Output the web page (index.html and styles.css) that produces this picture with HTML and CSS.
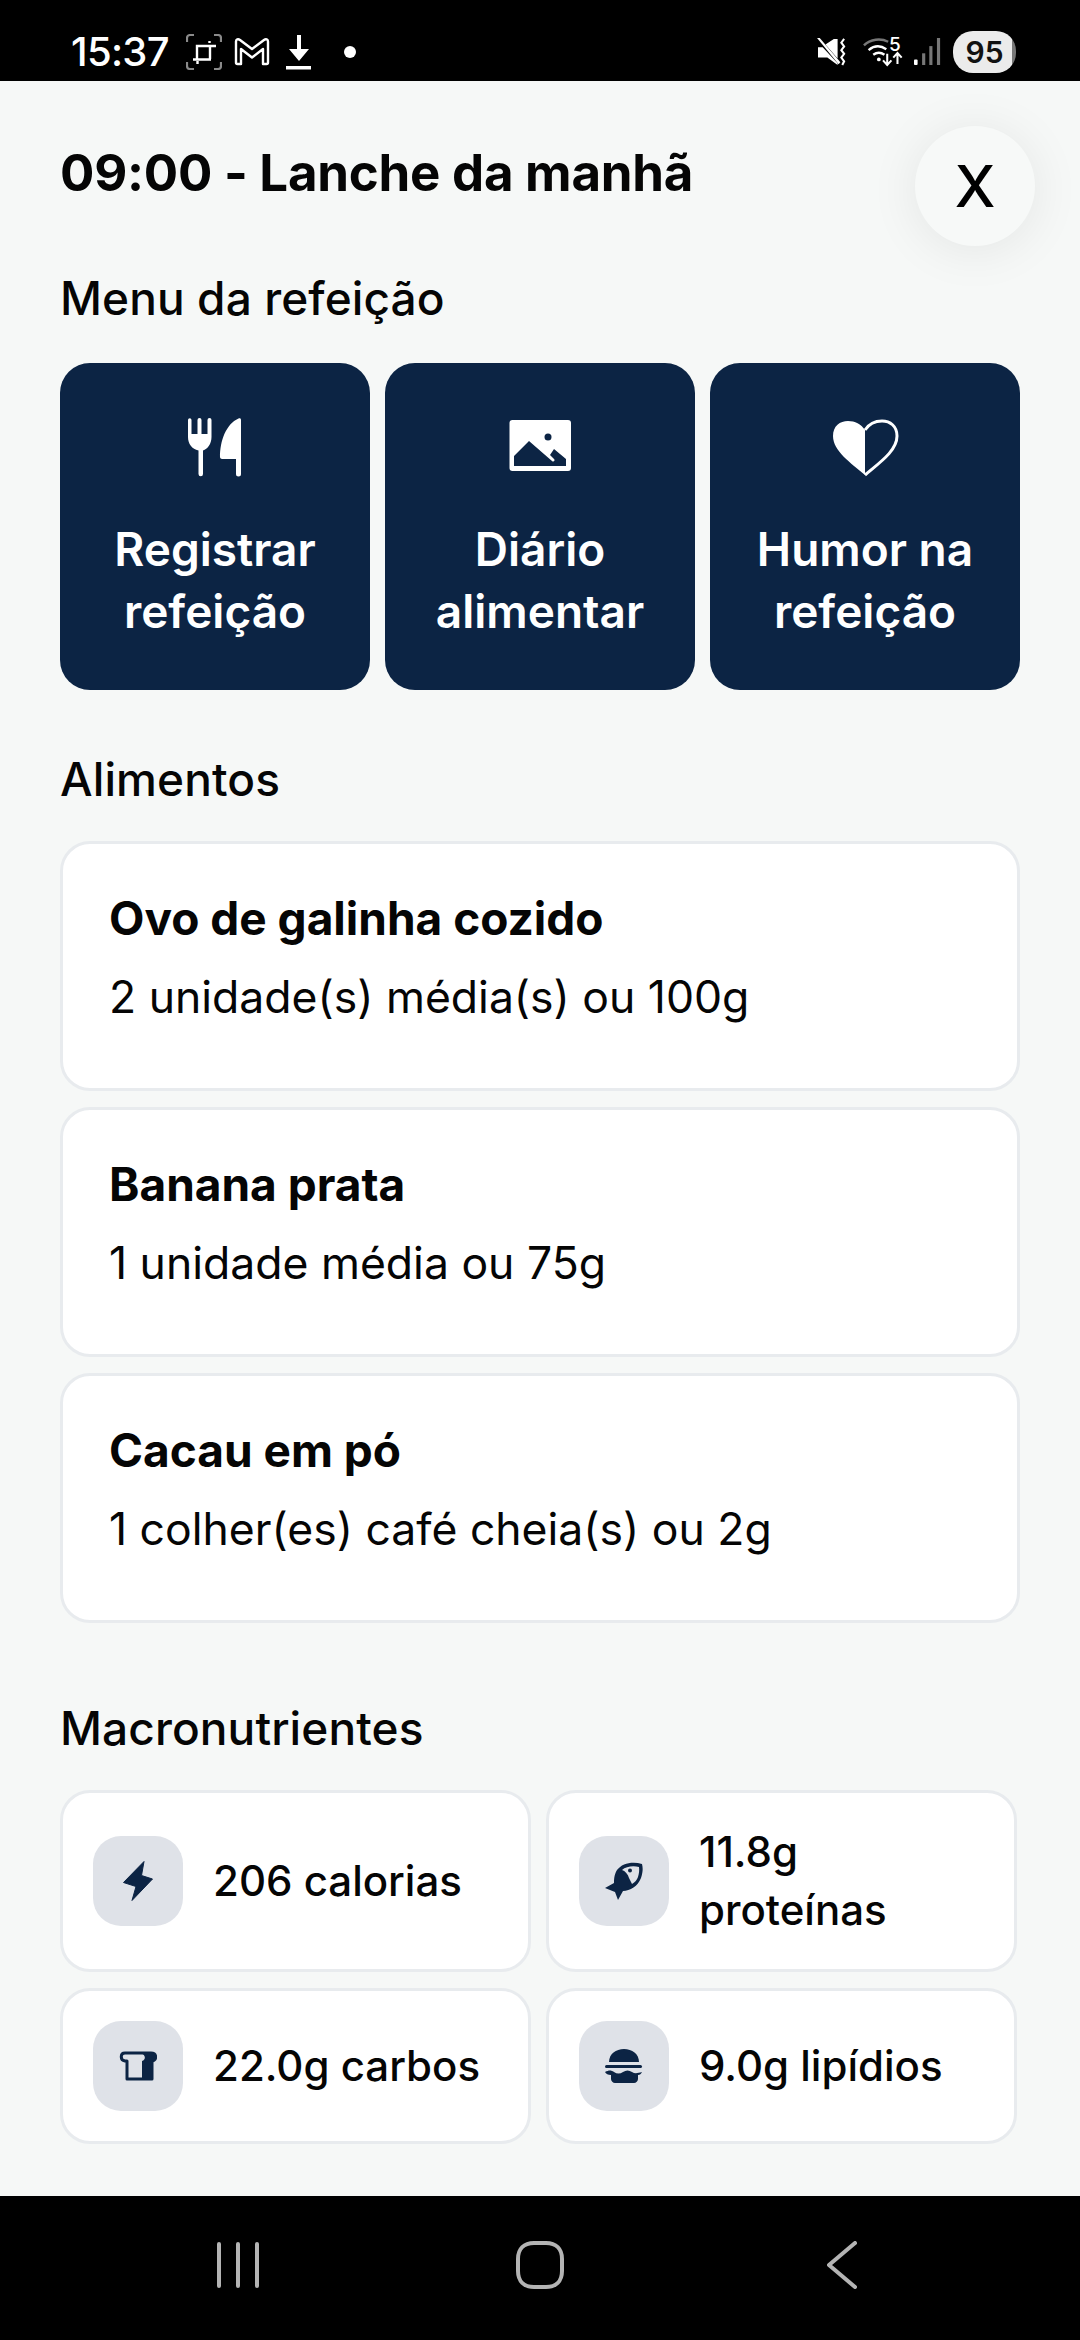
FILE: index.html
```html
<!DOCTYPE html>
<html lang="pt-BR">
<head>
    <meta charset="UTF-8">
    <meta name="viewport" content="width=device-width, initial-scale=1.0">
    <title>Lanche da manhã</title>
    <link rel="stylesheet" href="styles.css">
</head>
<body>

    <div class="status-bar">
        <div class="status-left">
            <span class="clock">15:37</span>
            <svg class="st-crop" width="36" height="36" viewBox="0 0 36 36" fill="none">
                <path d="M1 8V4a3 3 0 0 1 3-3h4M28 1h4a3 3 0 0 1 3 3v4M35 28v4a3 3 0 0 1-3 3h-4M8 35H4a3 3 0 0 1-3-3v-4" stroke="#8a8a8a" stroke-width="2.2"/>
                <path d="M7 25.500h18M11 25V12h19M24 12v13M23.500 7v2M11.500 27v3" stroke="#fff" stroke-width="2.4"/>
            </svg>
            <svg class="st-gmail" width="36" height="30" viewBox="0 0 36 30" fill="none">
                <path d="M7 27H3.500a1.500 1.500 0 0 1-1.500-1.500V4.500C2 2.500 4 1.500 6 3l12 9 12-9c2-1.500 4-.5 4 1.500v21a1.500 1.500 0 0 1-1.500 1.500H29V12l-11 8.500L7 12z" stroke="#fff" stroke-width="2.400" stroke-linejoin="round"/>
            </svg>
            <svg class="st-down" width="26" height="36" viewBox="0 0 26 36" fill="#fff">
                <path d="M11 1h4v14h8L13 27 3 15h8z"/>
                <rect x="0" y="32" width="25" height="3.500"/>
            </svg>
            <span class="st-dot"></span>
        </div>
        <div class="status-right">
            <svg class="st-mute" width="30" height="28" viewBox="0 0 32 30" fill="#fff">
                <path d="M1 10h5l16 17v2L11 21H1zM9 7l9-6h4v21z"/>
                <path d="M0 0l2-1 23 27-2 2z"/>
                <path d="M29 1l-3 4 3 4-3 4 3 4-3 4 3 4-2 4" fill="none" stroke="#fff" stroke-width="2.200"/>
            </svg>
            <div class="st-wifi">
                <svg width="41" height="30" viewBox="0 0 44 32" fill="none">
                    <path d="M1 9C8 2 19 1 27 5" stroke="#777" stroke-width="2.600"/>
                    <path d="M6 14c6-5 13-5 19-1M11 19c4-3 8-3 12 0" stroke="#fff" stroke-width="2.600"/>
                    <circle cx="17" cy="24" r="2" fill="#fff"/>
                    <path d="M26 18v12M21.500 25l4.500 5 4.500-5M37 29V17M32.500 22l4.500-5 4.500 5" stroke="#fff" stroke-width="2.200"/>
                </svg>
                <span class="wifi-five">5</span>
            </div>
            <svg class="st-signal" width="27" height="29" viewBox="0 0 30 30">
                <rect x="0" y="24" width="4" height="6" rx="1" fill="#fff"/>
                <rect x="9" y="17" width="3.500" height="13" fill="#777"/>
                <rect x="17" y="9" width="3.500" height="21" fill="#777"/>
                <rect x="25.500" y="0" width="3.500" height="30" fill="#777"/>
            </svg>
            <span class="battery">95</span>
        </div>
    </div>

    <main class="sheet">
        <button class="close-btn">X</button>

        <h1>09:00 - Lanche da manhã</h1>

        <h2 class="menu-title">Menu da refeição</h2>
        <div class="menu-grid">
            <div class="menu-btn">
                <svg width="80" height="80" viewBox="0 0 80 80" fill="#fff">
                    <path d="M13 11a1.700 1.700 0 0 1 3.500 0v14h6V11a2 2 0 0 1 4 0v14h6V11a2 2 0 0 1 4 0v17c0 7-4 12-8.500 13.500V65a2.200 2.200 0 0 1-4.500 0V41.500C17 40 13 35 13 28z"/>
                    <path d="M66 11v54a2.500 2.500 0 0 1-5 0V50H47c-1 0-2-1-2-2 0-16 6-33 18.500-38.500 1.500-.5 2.500 0 2.500 1.500z"/>
                </svg>
                <span>Registrar refeição</span>
            </div>
            <div class="menu-btn">
                <svg width="80" height="80" viewBox="0 0 80 80">
                    <rect x="9.500" y="11" width="61.500" height="51" rx="3" fill="#fff"/>
                    <circle cx="48" cy="28" r="3.500" fill="#0c2444"/>
                    <path d="M14 57V47l15-15 23 20c1.500 1.500 3.500-.5 2-2l-4-4 4-6 12 10v7z" fill="#0c2444"/>
                </svg>
                <span>Diário alimentar</span>
            </div>
            <div class="menu-btn">
                <svg width="80" height="80" viewBox="0 0 80 80">
                    <path d="M40 66C26 54 8 42 8 27 8 17 15 12 23 12c7 0 13 3 17 9z" fill="#fff"/>
                    <path d="M40 66c14-12 32-24 32-39C72 17 65 12 57 12c-7 0-13 3-17 9" fill="none" stroke="#fff" stroke-width="3"/>
                </svg>
                <span>Humor na refeição</span>
            </div>
        </div>

        <h2 class="foods-title">Alimentos</h2>
        <div class="food-list">
            <div class="food-card">
                <h3>Ovo de galinha cozido</h3>
                <p>2 unidade(s) média(s) ou 100g</p>
            </div>
            <div class="food-card">
                <h3>Banana prata</h3>
                <p>1 unidade média ou 75g</p>
            </div>
            <div class="food-card">
                <h3>Cacau em pó</h3>
                <p>1 colher(es) café cheia(s) ou 2g</p>
            </div>
        </div>

        <h2 class="macros-title">Macronutrientes</h2>
        <div class="macro-grid">
            <div class="macro-card">
                <div class="macro-icon">
                    <svg width="30" height="40" viewBox="0 0 30 40" fill="#0c2444">
                        <path d="M21 .5 .5 21.500 13 25.500 9 39.500 29.500 18 18.500 14.500z" stroke="#0c2444" stroke-linejoin="round"/>
                    </svg>
                </div>
                <span>206 calorias</span>
            </div>
            <div class="macro-card">
                <div class="macro-icon">
                    <svg width="38" height="38" viewBox="0 0 38 38">
                        <path d="M37 2C28-1 17 1 12 8c-3 5-3 10-3 13L0 26l10 4 3 8 5-9c7 0 15-5 18-13 2-6 2-10 1-14z" fill="#0c2444"/>
                        <path d="M34 5c-6-1.500-13-.5-17 3 3 1 6 4 7 8 1 2 2 4 3 6 3-2 5-4 6-7 1-3 1.500-7 1-10z" fill="#dfe2e8"/>
                        <circle cx="25" cy="8.500" r="2" fill="#0c2444"/>
                    </svg>
                </div>
                <span>11.8g proteínas</span>
            </div>
            <div class="macro-card">
                <div class="macro-icon">
                    <svg width="38" height="30" viewBox="0 0 38 30">
                        <path d="M8 28V10H6C1 9 1 2 6 2h26c6 0 6 7 1 8v18z" fill="none" stroke="#0c2444" stroke-width="3" stroke-linejoin="round"/>
                        <path d="M22 2h10c6 0 6 7 1 8v18H23V10c4-1 4-6-1-8z" fill="#0c2444"/>
                    </svg>
                </div>
                <span>22.0g carbos</span>
            </div>
            <div class="macro-card">
                <div class="macro-icon">
                    <svg width="38" height="34" viewBox="0 0 38 34" fill="#0c2444">
                        <path d="M4 13C4 5 11 0 19 0s15 5 15 13z"/>
                        <rect x="0" y="16" width="37" height="3" rx="1.500"/>
                        <path d="M0 23c4-2 6-2 9 0s6 2 9 0 6-2 9 0 6 1 10 0c-1 2-2 3-4 3v4c0 2-2 4-4 4H10c-2 0-4-2-4-4v-4c-3 0-5-1-6-3z"/>
                    </svg>
                </div>
                <span>9.0g lipídios</span>
            </div>
        </div>
    </main>

    <nav class="nav-bar">
        <div class="nav-slot">
            <svg width="44" height="48" viewBox="0 0 44 48" stroke="#b4b4b4" stroke-width="4" stroke-linecap="round">
                <path d="M3 3v42M22 3v42M41 3v42"/>
            </svg>
        </div>
        <div class="nav-slot">
            <svg width="48" height="48" viewBox="0 0 48 48" fill="none" stroke="#b4b4b4" stroke-width="4">
                <path d="M18 2h12c10 0 16 6 16 16v12c0 10-6 16-16 16H18C8 46 2 40 2 30V18C2 8 8 2 18 2z"/>
            </svg>
        </div>
        <div class="nav-slot">
            <svg width="30" height="48" viewBox="0 0 30 48" fill="none" stroke="#b4b4b4" stroke-width="4" stroke-linecap="round" stroke-linejoin="round">
                <path d="M28 2 2 24l26 22"/>
            </svg>
        </div>
    </nav>

</body>
</html>
```

FILE: styles.css
```css
* {
    padding: 0;
    margin: 0;
    box-sizing: border-box;
}

body {
    width: 1080px;
    height: 2340px;
    display: flex;
    flex-direction: column;
    background-color: #f6f8f7;
    color: #050505;
    font-family: Inter, "Noto Sans", sans-serif;
    overflow: hidden;
}

/* status bar */
.status-bar {
    height: 81px;
    flex-shrink: 0;
    background-color: #000;
    color: #fff;
    display: flex;
    justify-content: space-between;
    align-items: center;
    padding: 22px 64px 0 71px;
}

.status-left, .status-right {
    display: flex;
    align-items: center;
}

.clock {
    font-size: 40px;
    font-weight: 500;
    letter-spacing: -0.7px;
    width: 115px;
}

.st-gmail {
    margin-left: 12px;
}

.st-down {
    margin-left: 16px;
}

.st-dot {
    width: 12px;
    height: 12px;
    border-radius: 50%;
    background-color: #fff;
    margin-left: 32px;
}

.st-wifi {
    position: relative;
    height: 30px;
    margin-left: 16px;
}

.wifi-five {
    position: absolute;
    top: -2px;
    left: 26px;
    font-size: 19px;
    font-weight: 500;
    line-height: 20px;
}

.st-signal {
    margin-left: 10px;
}

.battery {
    width: 63px;
    height: 42px;
    margin-left: 12px;
    border-radius: 20px;
    background: linear-gradient(to right, #ebebeb 94%, #777 94%);
    color: #111;
    font-size: 30px;
    font-weight: 600;
    line-height: 42px;
    text-align: center;
}

/* main sheet */
.sheet {
    position: relative;
    flex: 1;
    padding: 0 60px;
}

.close-btn {
    position: absolute;
    top: 45px;
    right: 45px;
    width: 120px;
    height: 120px;
    border: none;
    border-radius: 50%;
    background-color: #f7f9f8;
    box-shadow: 0 4px 50px rgba(0, 0, 0, 0.08);
    color: #000;
    font-family: Inter, sans-serif;
    font-size: 58px;
    font-weight: 500;
    text-align: center;
}

h1 {
    font-size: 51px;
    font-weight: 700;
    line-height: 60px;
    letter-spacing: -0.25px;
    margin-top: 62px;
}

h2 {
    font-size: 46px;
    font-weight: 500;
    line-height: 60px;
    letter-spacing: 0.1px;
}

.menu-title {
    margin-top: 65px;
    margin-bottom: 35px;
}

.menu-grid {
    display: grid;
    grid-template-columns: repeat(3, 310px);
    gap: 15px;
}

.menu-btn {
    height: 327px;
    border-radius: 30px;
    background-color: #0c2444;
    color: #fff;
    display: flex;
    flex-direction: column;
    align-items: center;
    padding: 46px 20px 0;
    font-size: 46px;
    font-weight: 600;
    line-height: 62px;
    text-align: center;
}

.menu-btn svg {
    margin-bottom: 29px;
}

.foods-title {
    margin-top: 59px;
    margin-bottom: 32px;
}

.food-list {
    display: flex;
    flex-direction: column;
    gap: 16px;
}

.food-card {
    height: 250px;
    background-color: #fff;
    border: 3px solid #e8ebee;
    border-radius: 30px;
    padding: 39px 46px 0;
}

.food-card h3 {
    font-size: 46px;
    font-weight: 700;
    line-height: 70px;
}

.food-card p {
    font-size: 44.500px;
    line-height: 70px;
    margin-top: 9px;
}

.macros-title {
    margin-top: 75px;
    margin-bottom: 32px;
}

.macro-grid {
    display: grid;
    grid-template-columns: repeat(2, 471px);
    gap: 16px 15px;
}

.macro-card {
    background-color: #fff;
    border: 3px solid #e8ebee;
    border-radius: 30px;
    padding: 30px;
    display: flex;
    align-items: center;
    gap: 30px;
    font-size: 42px;
    font-weight: 500;
    line-height: 58px;
}

.macro-icon {
    width: 90px;
    height: 90px;
    flex-shrink: 0;
    border-radius: 28px;
    background-color: #dfe2e8;
    display: flex;
    align-items: center;
    justify-content: center;
}

/* navigation bar */
.nav-bar {
    height: 144px;
    flex-shrink: 0;
    background-color: #000;
    display: flex;
    justify-content: center;
    align-items: center;
    padding-bottom: 6px;
}

.nav-slot {
    width: 302px;
    display: flex;
    justify-content: center;
}
```
